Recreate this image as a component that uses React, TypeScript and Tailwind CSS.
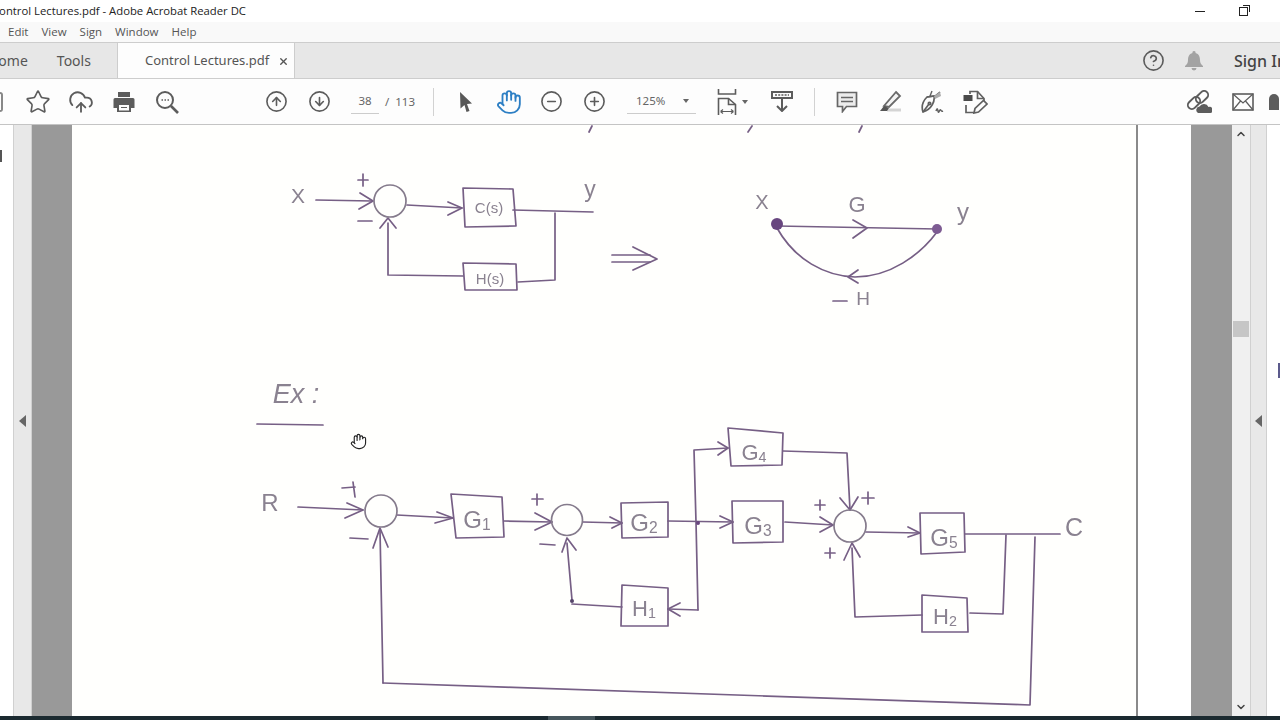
import type { ReactNode } from "react"
import { CircleArrowDown, CircleArrowUp, CircleHelp, CircleMinus, CirclePlus, CloudUpload, Hand, Star, ChevronUp, ChevronDown, X } from "lucide-react"

const uiFont = "font-['Noto_Sans','Open_Sans',sans-serif]"
const iconStroke = "#5c5c5c"

// hand drawn lines of the scanned page, in screen coordinates
const inkLines = [
  // top diagram
  "M316 200 L372 201", "M360 193 L373 201 L359 209",
  "M407 205 L462 208", "M448 202 L462 208 L448 215",
  "M463 188 L513 189 L516 226 L465 227 Z",
  "M513 210 L593 212", "M555 213 L555 280 L518 282",
  "M463 263 L516 264 L517 290 L465 290 Z",
  "M463 276 L388 275 L388 223", "M380 228 L388 218 L396 228",
  "M612 255 L650 255", "M612 262 L650 262", "M633 247 L657 259 L633 270",
  "M358 221 L372 221", "M358 180 L368 180", "M363 174 L363 186",
  // signal flow graph
  "M777 226 L937 229", "M853 220 L867 228 L853 238",
  "M777 228 C795 260 825 276 855 277 C890 277 920 255 937 232",
  "M858 270 L848 277 L858 283", "M833 301 L847 301",
  // example underline
  "M257 424 L323 425",
  // main diagram, left part
  "M298 507 L363 510", "M347 503 L363 510 L345 518",
  "M342 488 L355 487", "M353 482 L355 497", "M350 538 L368 539",
  "M383 683 L380 530", "M373 548 L380 528 L388 547",
  "M397 515 L453 518", "M437 512 L453 518 L435 523",
  "M451 494 L502 497 L504 537 L456 538 Z",
  "M504 521 L552 522", "M535 513 L552 522 L535 530",
  "M532 499 L543 499", "M537 494 L537 505", "M540 544 L555 545",
  "M583 522 L622 523", "M610 517 L622 523 L612 528",
  "M621 503 L668 502 L668 537 L622 538 Z",
  "M572 600 L567 543", "M562 552 L567 538 L576 550", "M572 604 L622 607",
  "M622 585 L668 588 L668 626 L621 626 Z",
  "M680 603 L668 609 L680 616", "M668 609 L698 610",
  "M383 683 L1030 705 L1035 537",
  // main diagram, right part
  "M668 521 L733 522", "M720 516 L733 522 L720 528",
  "M728 448 L694 450 L696 522 L698 610", "M718 442 L728 448 L718 455",
  "M728 428 L783 433 L782 465 L731 466 Z",
  "M783 451 L847 453 L850 510", "M840 498 L850 510 L858 497",
  "M862 498 L874 498", "M868 492 L868 504", "M815 505 L825 505", "M820 500 L820 510",
  "M825 553 L835 553", "M830 548 L830 558",
  "M732 501 L783 501 L783 542 L733 543 Z",
  "M785 522 L833 525", "M820 517 L833 525 L820 532",
  "M866 532 L920 533", "M908 527 L920 533 L908 537",
  "M920 513 L964 513 L965 552 L921 554 Z",
  "M965 534 L1060 534", "M1006 535 L1003 614 L970 613",
  "M922 595 L967 598 L968 632 L922 632 Z",
  "M922 615 L855 617 L852 548", "M844 560 L852 543 L860 557",
  // cut off writing at the top of the page
  "M592 126 L589 132", "M752 126 L748 132", "M862 126 L859 132",
]

const sumCircles = [
  { cx: 390, cy: 201, r: 16 },
  { cx: 381, cy: 511, r: 16 },
  { cx: 567, cy: 520, r: 15.5 },
  { cx: 850, cy: 526, r: 16 },
]

const inkLabels: { x: number; y: number; size: number; text: string; sub?: string; italic?: boolean }[] = [
  { x: 298, y: 203, size: 21, text: "X" },
  { x: 590, y: 197, size: 23, text: "y" },
  { x: 489, y: 213, size: 15, text: "C(s)" },
  { x: 490, y: 284, size: 15, text: "H(s)" },
  { x: 762, y: 209, size: 20, text: "X" },
  { x: 857, y: 212, size: 22, text: "G" },
  { x: 963, y: 220, size: 24, text: "y" },
  { x: 863, y: 305, size: 19, text: "H" },
  { x: 296, y: 403, size: 27, text: "Ex :", italic: true },
  { x: 270, y: 511, size: 24, text: "R" },
  { x: 477, y: 528, size: 24, text: "G", sub: "1" },
  { x: 644, y: 531, size: 24, text: "G", sub: "2" },
  { x: 644, y: 616, size: 22, text: "H", sub: "1" },
  { x: 754, y: 460, size: 22, text: "G", sub: "4" },
  { x: 758, y: 534, size: 24, text: "G", sub: "3" },
  { x: 944, y: 546, size: 24, text: "G", sub: "5" },
  { x: 945, y: 624, size: 22, text: "H", sub: "2" },
  { x: 1074, y: 536, size: 25, text: "C" },
]

function ScannedPage() {
  return (
    <svg viewBox="72 125 1064 591" className="h-full w-full blur-[0.4px]" fontFamily="Liberation Sans, sans-serif">
      <g fill="none" stroke="#765f85" strokeWidth="1.7" strokeLinejoin="round" strokeLinecap="round">
        {inkLines.map((d) => (
          <path key={d} d={d} />
        ))}
        {sumCircles.map((c) => (
          <circle key={c.cx} {...c} stroke="#857b8c" />
        ))}
      </g>
      <circle cx="777" cy="224" r="6" fill="#68467f" />
      <circle cx="937" cy="229" r="5" fill="#7d5b92" />
      <circle cx="698" cy="523" r="2" fill="#68467f" />
      <circle cx="572" cy="601" r="2" fill="#55456a" />
      {inkLabels.map((l) => (
        <text key={l.x + l.text} x={l.x} y={l.y} fontSize={l.size} fontStyle={l.italic ? "italic" : undefined} fill="#8a8290" textAnchor="middle">
          {l.text}
          {l.sub && <tspan fontSize={l.size * 0.65} dy="2">{l.sub}</tspan>}
        </text>
      ))}
      <Hand x={350} y={433} width={17} height={17} fill="#fff" stroke="#222" strokeWidth={1.6} />
    </svg>
  )
}

function Slot({ children, className = "w-[43px]" }: { children: ReactNode; className?: string }) {
  return <div className={`flex h-full shrink-0 items-center justify-center ${className}`}>{children}</div>
}

function Caret({ className = "" }: { className?: string }) {
  return <span className={`h-0 w-0 border-x-[3.5px] border-t-[4px] border-x-transparent border-t-[#666] ${className}`} />
}

function SideArrow() {
  return <span className="h-0 w-0 border-y-[6px] border-r-[7px] border-y-transparent border-r-[#666]" />
}

function PrinterIcon() {
  return (
    <svg width="24" height="24" viewBox="0 0 24 24" fill={iconStroke}>
      <path d="M6 2h12v5H6z" />
      <path fillRule="evenodd" d="M3 8h18a1.5 1.5 0 0 1 1.5 1.500V18H19v4H5v-4H1.500V9.500A1.500 1.500 0 0 1 3 8zm4 7v5.500h10V15z" />
      <path d="M9 17h6v1H9z" />
    </svg>
  )
}

function DotSearchIcon() {
  return (
    <svg width="26" height="26" viewBox="0 0 26 26" fill="none" stroke={iconStroke} strokeWidth="2">
      <circle cx="11" cy="11" r="8" />
      <path d="M17 17l7 7" strokeWidth="2.600" />
      <path d="M7.500 11h1.500M10.500 11h1.500M13.500 11h1.500" strokeWidth="1.500" />
    </svg>
  )
}

function PointerIcon() {
  return (
    <svg width="18" height="22" viewBox="0 0 18 22" fill="#585858">
      <path d="M3 1l12 11.500-5 .5 2.500 7-3 1-2-7-4 3.500z" />
    </svg>
  )
}

function FitPageIcon() {
  return (
    <svg width="20" height="26" viewBox="0 0 20 26" fill="none" stroke={iconStroke} strokeWidth="1.600">
      <path d="M1.500 0v5h17V0" />
      <path d="M1.500 26V9.500h10l7 6V26" />
      <path d="M11.500 9.500v6h7" />
      <path d="M3.500 22.500h13M3.500 22.500l2.500-2M3.500 22.500l2.500 2M16.500 22.500l-2.500-2M16.500 22.500l-2.500 2" strokeWidth="1.200" />
    </svg>
  )
}

function ToolDownloadIcon() {
  return (
    <svg width="22" height="21" viewBox="0 0 22 21" fill="none" stroke={iconStroke} strokeWidth="2">
      <rect x="1" y="1" width="20" height="6" />
      <path d="M4 4h14" strokeWidth="1.600" strokeDasharray="2 1.200" />
      <path d="M11 8v12M6 15l5 5 5-5" />
    </svg>
  )
}

function CommentIcon() {
  return (
    <svg width="22" height="22" viewBox="0 0 22 22" fill="#ececec" stroke="#666" strokeWidth="1.700">
      <path d="M1.500 1.500h19v14h-10l-4 5v-5h-5z" />
      <path d="M5 6.500h12M5 10.500h12" fill="none" strokeWidth="1.400" />
    </svg>
  )
}

function HighlightIcon() {
  return (
    <svg width="24" height="24" viewBox="0 0 24 24" fill="none" stroke="#6a6a6a" strokeWidth="1.800">
      <path d="M9 20h14" stroke="#d4d4d4" strokeWidth="3" />
      <path d="M18 2l4 4L11 17l-5-1z" fill="#f4f4f4" />
      <path d="M6 16l5 2-2 3H2z" fill="#555" stroke="none" />
    </svg>
  )
}

function SignIcon() {
  return (
    <svg width="24" height="24" viewBox="0 0 24 24" fill="none" stroke="#606060" strokeWidth="1.700">
      <path d="M6 7l7-1c1 5-2 13-11 16C0 16 2 11 6 7z" />
      <path d="M2 22l6-8" />
      <circle cx="8.500" cy="13.500" r="1.200" />
      <path d="M9 6L11 1M6 7l8-1 5-4-1 1" strokeWidth="1.400" />
      <path d="M13 6l6-4 1 4-6 3z" fill="#ababab" stroke="none" />
      <path d="M15 21c1-3 1.500-3 2 0s1 0 2-1 1 2 3 1" strokeWidth="1.500" />
    </svg>
  )
}

function ShareEditIcon() {
  return (
    <svg width="25" height="24" viewBox="0 0 25 24" fill="none" stroke="#606060" strokeWidth="1.700">
      <path d="M7 4V1.500h7.500l6.500 7V11M3 15v7.500h8" />
      <path d="M14.500 1.500v7h6.500" />
      <rect x="0.500" y="5" width="9" height="6" fill="#4a4a4a" stroke="none" />
      <path d="M11 23l1-4.500 8.500-8 3.500 3.500-8.500 8z" />
    </svg>
  )
}

function LinkCloudIcon() {
  return (
    <svg width="26" height="24" viewBox="0 0 26 24" fill="none" stroke={iconStroke} strokeWidth="1.900">
      <rect x="1" y="9" width="14" height="8" rx="4" transform="rotate(-45 8 13)" />
      <rect x="9" y="3" width="14" height="8" rx="4" transform="rotate(-45 16 7)" />
      <path d="M12 23a3.500 3.500 0 0 1 1.500-6.500 5 5 0 0 1 9 .5 3 3 0 0 1 2 6z" fill={iconStroke} stroke="none" />
    </svg>
  )
}

function MailIcon() {
  return (
    <svg width="22" height="18" viewBox="0 0 22 18" fill="none" stroke={iconStroke} strokeWidth="1.600">
      <rect x="1" y="1" width="20" height="16" />
      <path d="M1 1l10 9 10-9M1 17l7.500-9M21 17l-7.500-9" strokeWidth="1.200" />
    </svg>
  )
}

function BellIcon() {
  return (
    <svg width="18" height="22" viewBox="0 0 18 22" fill="#a3a3a3">
      <path d="M9 1a1.500 1.500 0 0 1 1.500 2C14 4 15 7 15 10c0 3 1 4 3 6v1H0v-1c2-2 3-3 3-6 0-3 1-6 4.500-7A1.500 1.500 0 0 1 9 1z" />
      <path d="M6.500 18h5a2.500 2.500 0 0 1-5 0z" />
    </svg>
  )
}

function Toolbar() {
  return (
    <div className="flex h-[46px] shrink-0 items-center overflow-hidden border-b border-[#c4c4c4] bg-[#fdfdfd]">
      <div className="h-[20px] w-[16px] shrink-0">
        <div className="h-full w-[3px] rounded-r-sm border-y-2 border-r-2 border-[#888]" />
      </div>
      <Slot><Star size={26} strokeWidth={1.5} color={iconStroke} /></Slot>
      <Slot><CloudUpload size={26} strokeWidth={1.7} color={iconStroke} /></Slot>
      <Slot><PrinterIcon /></Slot>
      <Slot><DotSearchIcon /></Slot>
      <div className="w-[67px] shrink-0" />
      <Slot><CircleArrowUp size={23} strokeWidth={1.7} color={iconStroke} /></Slot>
      <Slot><CircleArrowDown size={23} strokeWidth={1.7} color={iconStroke} /></Slot>
      <div className="ml-[10px] flex h-[25px] w-[28px] shrink-0 items-center justify-center border-b border-[#ccc] text-[11.5px] text-[#666]">38</div>
      <div className="ml-[6px] w-[40px] shrink-0 text-[11.5px] text-[#666]">/&nbsp;&nbsp;113</div>
      <div className="ml-[8px] h-[28px] w-px shrink-0 bg-[#d2d2d2]" />
      <Slot className="ml-[10px] w-[43px]"><PointerIcon /></Slot>
      <Slot><Hand size={26} strokeWidth={1.7} color="#2d7fc4" /></Slot>
      <Slot><CircleMinus size={23} strokeWidth={1.7} color={iconStroke} /></Slot>
      <Slot><CirclePlus size={23} strokeWidth={1.7} color={iconStroke} /></Slot>
      <div className="ml-[11px] flex h-[25px] w-[69px] shrink-0 items-center justify-between border-b border-[#ccc] pl-[9px] pr-[7px] text-[11.5px] text-[#666]">
        125%
        <Caret />
      </div>
      <Slot className="ml-[17px] w-[28px]"><FitPageIcon /></Slot>
      <Caret className="ml-[1px] shrink-0" />
      <Slot className="ml-[16px] w-[36px]"><ToolDownloadIcon /></Slot>
      <div className="ml-[14px] h-[28px] w-px shrink-0 bg-[#d2d2d2]" />
      <Slot className="ml-[10px] w-[43px]"><CommentIcon /></Slot>
      <Slot><HighlightIcon /></Slot>
      <Slot><SignIcon /></Slot>
      <Slot><ShareEditIcon /></Slot>
      <div className="w-[180px] shrink-0" />
      <Slot className="w-[44px]"><LinkCloudIcon /></Slot>
      <Slot className="w-[44px]"><MailIcon /></Slot>
      <div className="ml-[4px] h-[16px] w-[10px] shrink-0 rounded-t-full bg-[#5c5c5c]" />
    </div>
  )
}

export default function App() {
  return (
    <div className={`flex h-screen w-screen flex-col overflow-hidden bg-white ${uiFont}`}>
      <div className="flex h-[22px] shrink-0 items-center justify-between bg-white">
        <span className="-ml-[8px] whitespace-nowrap font-['Open_Sans',sans-serif] text-[11.3px] text-[#222]">Control Lectures.pdf - Adobe Acrobat Reader DC</span>
        <div className="flex items-center">
          <div className="h-px w-[10px] bg-[#222]" />
          <div className="relative ml-[34px] mr-[32px] h-[9px] w-[9px] border border-[#222] bg-white">
            <div className="absolute -right-[3px] -top-[3px] h-[7px] w-[7px] border-r border-t border-[#222]" />
          </div>
        </div>
      </div>
      <div className="flex h-[20px] shrink-0 items-center gap-[13px] bg-[#f9f9f9] pl-[8px] font-['Open_Sans',sans-serif] text-[11.5px] text-[#555]">
        <span>Edit</span>
        <span>View</span>
        <span>Sign</span>
        <span>Window</span>
        <span>Help</span>
      </div>

      <div className="flex h-[37px] shrink-0 items-stretch overflow-hidden border-y border-[#cdcdcd] bg-[#e7e7e7] text-[14px] text-[#555]">
        <div className="-ml-[12px] flex w-[130px] shrink-0 items-center gap-[29px] border-r border-[#cdcdcd]">
          <span>Home</span>
          <span>Tools</span>
        </div>
        <div className="-mb-px flex w-[177px] shrink-0 items-center border-r border-[#cdcdcd] bg-[#fdfdfd] pl-[27px] text-[13px]">
          Control Lectures.pdf
          <X size={11} strokeWidth={3} className="ml-[9px]" />
        </div>
        <div className="ml-auto flex shrink-0 items-center">
          <CircleHelp size={23} strokeWidth={1.7} color={iconStroke} />
          <div className="ml-[20px]"><BellIcon /></div>
          <span className="ml-[31px] w-[46px] overflow-hidden whitespace-nowrap text-[16px] font-medium text-[#444]">Sign In</span>
        </div>
      </div>

      <Toolbar />

      <div className="flex min-h-0 flex-1">
        <div className="relative w-[13px] shrink-0 bg-white">
          <div className="absolute left-0 top-[25px] h-[12px] w-[2px] bg-[#555]" />
        </div>
        <div className="flex w-[19px] shrink-0 items-center justify-center border-x border-[#d0d0d0] bg-[#e8e8e8]"><SideArrow /></div>
        <div className="w-[40px] shrink-0 bg-[#999]" />
        <div className="w-[1064px] shrink-0 bg-[#fffffd]"><ScannedPage /></div>
        <div className="w-[2px] shrink-0 bg-[#8a8a8a]" />
        <div className="w-[53px] shrink-0 bg-white" />
        <div className="w-[41px] shrink-0 bg-[#999]" />
        <div className="relative flex w-[18px] shrink-0 flex-col items-center justify-between bg-[#f0f0f0]">
          <ChevronUp size={12} strokeWidth={3} color="#444" className="mt-[3px]" />
          <div className="absolute left-[1px] right-[1px] top-[196px] h-[16px] bg-[#c6c6c6]" />
          <ChevronDown size={12} strokeWidth={3} color="#444" className="mb-[3px]" />
        </div>
        <div className="flex w-[17px] shrink-0 items-center justify-center border-x border-[#d0d0d0] bg-[#e8e8e8]"><SideArrow /></div>
        <div className="relative flex-1 bg-white">
          <div className="absolute right-0 top-[238px] h-[15px] w-[2px] bg-[#5b5a8c]" />
        </div>
      </div>

      <div className="flex h-[4px] shrink-0 bg-[#1b2a30]">
        <div className="ml-[548px] w-[47px] bg-[#46565c]" />
      </div>
    </div>
  )
}
